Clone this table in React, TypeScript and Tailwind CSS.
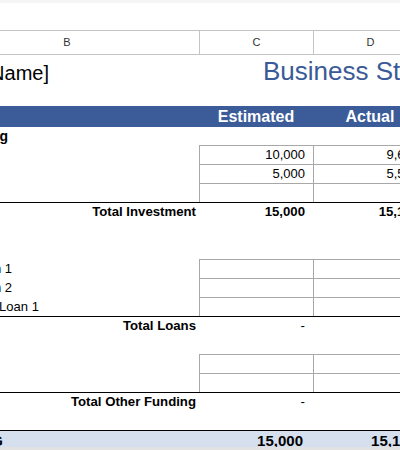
import React from 'react';

// column widths B / C / D, column B starts 65px left of the viewport
const grid = 'grid grid-cols-[264px_114px_114px] w-[492px] -ml-[65px]';

type Line = { label?: string; pad: string; est?: string; act?: string };

const investment: Line[] = [
  { label: 'Cash', pad: 'pl-[4px]', est: '10,000', act: '9,600' },
  { label: 'Assets', pad: 'pl-[4px]', est: '5,000', act: '5,500' },
  { label: '', pad: 'pl-[4px]' },
];

const loans: Line[] = [
  { label: 'Bank Loan 1', pad: 'pl-[4px]' },
  { label: 'Bank Loan 2', pad: 'pl-[4px]' },
  { label: 'Other Loan 1', pad: 'pl-[28px]' },
];

const other: Line[] = [
  { label: 'Grant', pad: 'pl-[4px]' },
  { label: 'Other', pad: 'pl-[4px]' },
];

const InputRows = ({ rows }: { rows: Line[] }) => (
  <>
    {rows.map((r, i) => (
      <div key={i} className={`${grid} h-[19px] text-[13px] leading-[18px]`}>
        <div className={`${r.pad} whitespace-nowrap pt-px`}>{r.label}</div>
        <div className="border-t border-l border-[#a8a8a8] pr-[8px] text-right">{r.est}</div>
        <div className="border-t border-l border-[#a8a8a8] pr-[8px] text-right">{r.act}</div>
      </div>
    ))}
  </>
);

const TotalRow = ({ label, est, act }: { label: string; est?: string; act?: string }) => (
  <div className={`${grid} h-[19px] border-t border-black text-[13.2px] font-bold leading-[18px]`}>
    <div className="pr-[3px] text-right">{label}</div>
    <div className={`pr-[8px] text-right ${est === '-' ? 'font-normal' : ''}`}>{est}</div>
    <div className="pr-[8px] text-right">{act}</div>
  </div>
);

export default function App() {
  return (
    <div className="h-[450px] w-[400px] overflow-hidden bg-white font-['Liberation_Sans',Arial,sans-serif] text-black">
      <div className="h-[3px] bg-[#f5f5f5]" />
      <div className="h-[27px]" />

      {/* column letters */}
      <div className={`${grid} h-[25px] border-y border-[#c4c4c4] text-[11px] leading-[23px] text-[#333]`}>
        <div className="text-center">B</div>
        <div className="border-l border-[#c4c4c4] text-center">C</div>
        <div className="border-l border-[#c4c4c4] text-center">D</div>
      </div>

      {/* title */}
      <div className="-ml-[65px] flex h-[51px] items-baseline pt-[1px] leading-[30px]">
        <div className="flex w-[114px] shrink-0 justify-end">
          <span className="shrink-0 whitespace-nowrap text-[20px]">[Company Name]</span>
        </div>
        <span className="shrink-0 whitespace-nowrap pl-[214px] text-[26px] text-[#3a5a98]">
          Business Startup Costs
        </span>
      </div>

      {/* header band */}
      <div className={`${grid} h-[21px] bg-[#3b5b99] text-[16px] font-bold leading-[21px] text-white`}>
        <div />
        <div className="text-center">Estimated</div>
        <div className="text-center">Actual</div>
      </div>

      <div className="-ml-[65px] flex h-[18px] text-[14px] font-bold leading-[18px]">
        <div className="flex w-[73px] justify-end">
          <span className="shrink-0 whitespace-nowrap">Startup Funding</span>
        </div>
      </div>

      <InputRows rows={investment} />
      <TotalRow label="Total Investment" est="15,000" act="15,100" />
      <div className="h-[38px]" />

      <InputRows rows={loans} />
      <TotalRow label="Total Loans" est="-" />
      <div className="h-[19px]" />

      <InputRows rows={other} />
      <TotalRow label="Total Other Funding" est="-" />
      <div className="h-[19px]" />

      {/* grand total */}
      <div className={`${grid} h-[17px] overflow-hidden border-t border-black bg-[#d6dfee] text-[15px] font-bold leading-[20px]`}>
        <div className="flex w-[68px] justify-end">
          <span className="shrink-0 whitespace-nowrap">TOTAL FUNDING</span>
        </div>
        <div className="pr-[10px] text-right">15,000</div>
        <div className="pr-[10px] text-right">15,100</div>
      </div>
      <div className="h-[3px] bg-[#e2e2e2]" />
    </div>
  );
}
